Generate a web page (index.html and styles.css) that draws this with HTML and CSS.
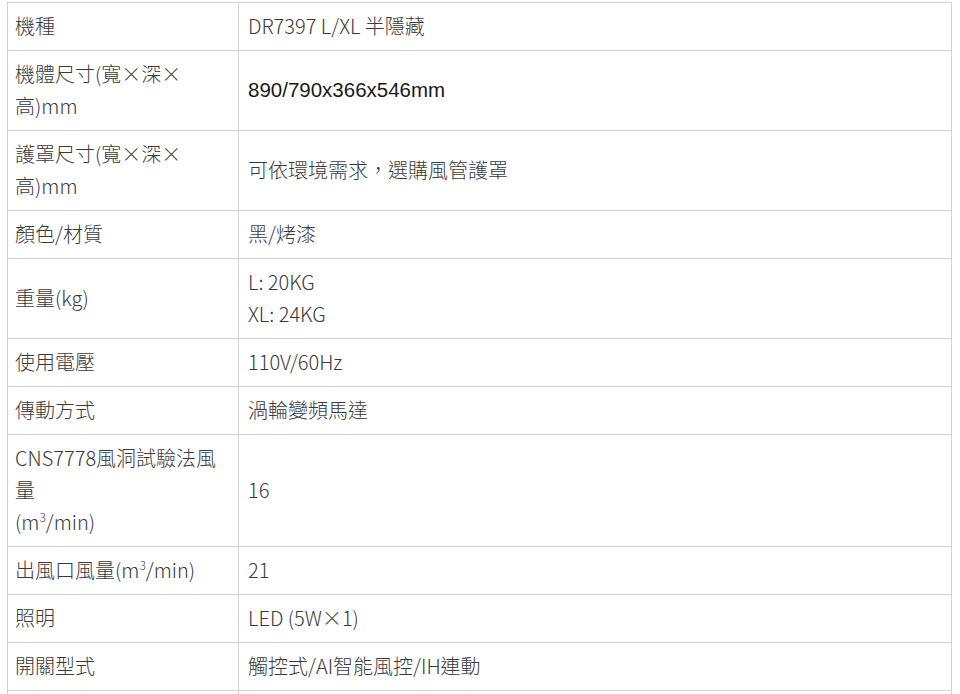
FILE: index.html
```html
<!DOCTYPE html>
<html lang="zh-Hant">
<head>
<meta charset="utf-8">
<link rel="stylesheet" href="styles.css">
</head>
<body>
<table class="spec">
  <colgroup><col class="c-label"><col class="c-value"></colgroup>
  <tbody>
    <tr><td>機種</td><td>DR7397 L/XL 半隱藏</td></tr>
    <tr><td>機體尺寸(寬×深×<br>高)mm</td><td class="arial">890/790x366x546mm</td></tr>
    <tr><td>護罩尺寸(寬×深×<br>高)mm</td><td>可依環境需求，選購風管護罩</td></tr>
    <tr><td>顏色/材質</td><td>黑/烤漆</td></tr>
    <tr><td>重量(kg)</td><td>L: 20KG<br>XL: 24KG</td></tr>
    <tr><td>使用電壓</td><td>110V/60Hz</td></tr>
    <tr><td>傳動方式</td><td>渦輪變頻馬達</td></tr>
    <tr><td>CNS7778風洞試驗法風<br>量<br>(m<sup>3</sup>/min)</td><td>16</td></tr>
    <tr><td>出風口風量(m<sup>3</sup>/min)</td><td>21</td></tr>
    <tr><td>照明</td><td>LED (5W×1)</td></tr>
    <tr><td>開關型式</td><td>觸控式/AI智能風控/IH連動</td></tr>
    <tr><td>&nbsp;</td><td>&nbsp;</td></tr>
  </tbody>
</table>
</body>
</html>
```

FILE: styles.css
```css
html, body {
  margin: 0;
  padding: 0;
  background: #fff;
}
body {
  padding: 2px 0 0 7px;
  font-family: "Noto Sans CJK TC", "Noto Sans", sans-serif;
  font-size: 20px;
  font-weight: 300;
  color: #3a3a3a;
}
.spec {
  border-collapse: collapse;
  width: 945px;
  table-layout: fixed;
}
.c-label { width: 231px; }
.spec td {
  border: 1px solid #d2d2d2;
  padding: 7px 8px 8px 7px;
  line-height: 32px;
  vertical-align: middle;
  text-align: left;
}
.spec td + td {
  padding-left: 9px;
}
.spec sup {
  font-size: 12px;
  line-height: 0;
  vertical-align: 8px;
}
.arial {
  font-family: "Liberation Sans", Arial, sans-serif;
  font-weight: 400;
  font-size: 20.5px;
  color: #1a1a1a;
}
```
